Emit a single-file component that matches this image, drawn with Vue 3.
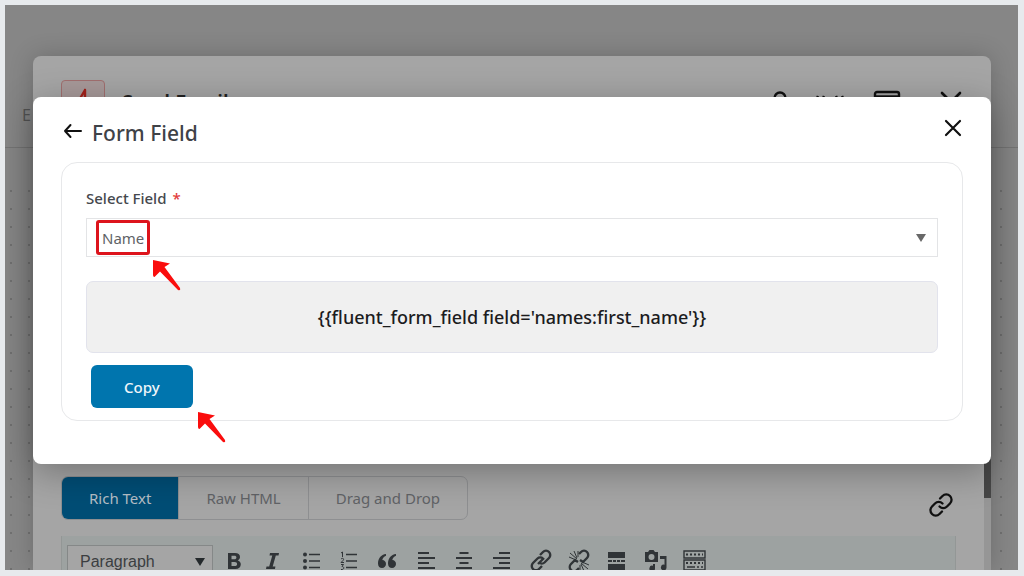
<script setup>
import { ref } from 'vue'

const field = ref('Name')
const format = ref('Paragraph')
const shortcode = "{{fluent_form_field field='names:first_name'}}"
const tabs = ['Rich Text', 'Raw HTML', 'Drag and Drop']
const activeTab = ref('Rich Text')
</script>

<template>
  <div class="page">
    <div class="stage">
      <div class="topbar"><span>E</span></div>
      <div class="dots"></div>

      <section class="panel" aria-label="Send Email">
        <header class="panel-head">
          <span class="badge">
            <svg width="26" height="28" viewBox="0 0 26 28" fill="none" stroke="#a3201a" stroke-width="2.4" stroke-linecap="round" stroke-linejoin="round"><path d="M15 2 8 14h10L10 26M15 2v9" /></svg>
          </span>
          <h1>Send Email</h1>
          <div class="head-tools">
            <button type="button" aria-label="Search"><svg width="14" height="28" viewBox="0 0 14 28" fill="none" stroke="#111" stroke-width="2.4"><circle cx="7" cy="10" r="5.500" /><path d="M7 16v9" /></svg></button>
            <button type="button" aria-label="Shortcodes"><svg width="32" height="28" viewBox="0 0 32 28" fill="none" stroke="#111" stroke-width="2.4"><path d="m4 8-3 6M10 8l-3 6M22 8l3 6M28 8l3 6" /></svg></button>
            <button type="button" aria-label="Layout"><svg width="28" height="28" viewBox="0 0 28 28" fill="none" stroke="#111" stroke-width="2.4"><rect x="2" y="4" width="24" height="20" rx="2" /><path d="M2 8.500h24" /></svg></button>
            <button type="button" class="close-panel" aria-label="Close panel"><svg width="22" height="28" viewBox="0 0 22 28" fill="none" stroke="#111" stroke-width="2.6" stroke-linecap="round"><path d="m2 5 18 18M20 5 2 23" /></svg></button>
          </div>
        </header>

        <div class="panel-body">
          <div class="tab-row">
            <div class="tabs">
              <button v-for="t in tabs" :key="t" type="button" :class="{ active: t === activeTab }" @click="activeTab = t">{{ t }}</button>
            </div>
            <button type="button" class="link-btn" aria-label="Insert link">
              <svg width="26" height="26" viewBox="0 0 26 26" fill="none" stroke="#111" stroke-width="2.3" stroke-linecap="round"><path d="M12 6.500 14.500 4a5.200 5.200 0 0 1 7.500 7.500l-3 3a5.200 5.200 0 0 1-7.500 0" /><path d="M14 19.500 11.500 22A5.200 5.200 0 0 1 4 14.500l3-3a5.200 5.200 0 0 1 7.500 0" /></svg>
            </button>
          </div>

          <div class="editor">
            <div class="format">
              <select v-model="format" aria-label="Text format">
                <option>Paragraph</option>
                <option>Heading 1</option>
              </select>
              <svg width="10" height="8" viewBox="0 0 10 8" fill="#25292c"><path d="M0 0h10L5 8z" /></svg>
            </div>
            <div class="tools">
              <button type="button" aria-label="Bold"><svg viewBox="0 0 24 24"><path fill-rule="evenodd" d="M6 4h7c3.200 0 5 1.500 5 4 0 1.600-.8 2.800-2.300 3.400 2 .5 3.100 1.900 3.100 3.900 0 3-2 4.700-5.500 4.700H6zm3.500 2.800v3.500h2.800c1.400 0 2.100-.6 2.100-1.800s-.7-1.700-2.100-1.700zm0 6.200v4.100h3.200c1.600 0 2.400-.7 2.400-2.100 0-1.300-.8-2-2.400-2z" /></svg></button>
              <button type="button" aria-label="Italic"><svg viewBox="0 0 24 24"><path d="M10 4h9l-.5 2.500h-2.700L12.700 17.500h2.700L15 20H6l.5-2.500h2.700l3.100-11H9.500z" /></svg></button>
              <button type="button" aria-label="Bulleted list"><svg viewBox="0 0 24 24"><circle cx="6" cy="5.500" r="2" /><circle cx="6" cy="12" r="2" /><circle cx="6" cy="18.500" r="2" /><path d="M10 4.700h11v1.600H10zm0 6.500h11v1.600H10zm0 6.500h11v1.600H10z" /></svg></button>
              <button type="button" aria-label="Numbered list"><svg viewBox="0 0 24 24"><path d="M9 4.700h11v1.600H9zm0 6.500h11v1.600H9zm0 6.500h11v1.600H9z" /><path fill="none" stroke="#303437" d="m4 4 1.500-1V8M4 10c2-1.500 3.500 0 2 1.500L4 13.500h3M4 15.500h2.500L5 17.500c2.500 0 2.500 3.500-1 3" /></svg></button>
              <button type="button" aria-label="Quote"><svg viewBox="0 0 24 24"><path d="M11 5C6 5.500 3 9.500 3 14.500 3 17.500 4.800 19 7 19c2.300 0 4-1.700 4-4s-1.600-3.800-3.700-3.900C7.600 9 8.900 7.300 11 6.700zm10 0c-5 .5-8 4.500-8 9.500 0 3 1.800 4.500 4 4.500 2.300 0 4-1.700 4-4s-1.600-3.800-3.700-3.900c.3-2.100 1.600-3.800 3.700-4.400z" /></svg></button>
              <button type="button" aria-label="Align left"><svg viewBox="0 0 24 24"><path d="M4 3h11v2H4zm0 5h17v2H4zm0 5h11v2H4zm0 5h17v2H4z" /></svg></button>
              <button type="button" aria-label="Align center"><svg viewBox="0 0 24 24"><path d="M7.500 3h9v2h-9zM4 8h16v2H4zm3.500 5h9v2h-9zM4 18h16v2H4z" /></svg></button>
              <button type="button" aria-label="Align right"><svg viewBox="0 0 24 24"><path d="M9 3h11v2H9zM3 8h17v2H3zm6 5h11v2H9zm-6 5h17v2H3z" /></svg></button>
              <button type="button" aria-label="Link"><svg viewBox="0 0 24 24" class="line"><path d="m11 6 3-3a4 4 0 0 1 6 6l-4.500 4.500a4 4 0 0 1-5.500 0M13 17l-3 3a4 4 0 0 1-6-6l4.500-4.500a4 4 0 0 1 5.500 0M9 15l6-6" /></svg></button>
              <button type="button" aria-label="Remove link"><svg viewBox="0 0 24 24" class="line"><path d="m12 5 2-2a4 4 0 0 1 6 6l-4 4-3-2M12 19l-2 2a4 4 0 0 1-6-6l4-4 3 2" /><path class="thin" d="M10 10 3 4M10 9 7 2M9 11 2 8M11 8V2M14 14l7 6M14 15l3 7M15 13l7 3M13 16v6" /></svg></button>
              <button type="button" aria-label="Read more"><svg viewBox="0 0 24 24"><path d="M3 3h17v6H3zm0 8h4v2H3zm5 0h3v2H8zm4 0h3v2h-3zm4 0h4v2h-4zM3 15h17v6H3z" /></svg></button>
              <button type="button" aria-label="Media"><svg viewBox="0 0 24 24"><path fill-rule="evenodd" d="M1 3h3l1.500-2h4L11 3h3v10H1zm6.500 2a3 3 0 1 0 0 6 3 3 0 0 0 0-6zM16 7h6.500v11.500a2.800 2.800 0 1 1-2-2.700V10H16zM9 15h2v4.500a2.800 2.800 0 1 1-2-2.700z" /></svg></button>
              <button type="button" aria-label="Keyboard toolbar"><svg viewBox="0 0 24 24" class="keys"><path d="M2 2h21v7H2zM2 11h21v10H2z" /><path class="dash" d="M4 5.500h17M4 14h17" /><path d="M5 18h8m2 0h2m2 0h2" /></svg></button>
            </div>
          </div>
        </div>
        <div class="scrollbar"><div class="thumb"></div></div>
      </section>

      <section class="modal" role="dialog" aria-labelledby="modal-title">
        <header class="modal-head">
          <button type="button" aria-label="Back"><svg width="20" height="20" viewBox="0 0 20 20" fill="none" stroke="#111" stroke-width="2" stroke-linecap="round" stroke-linejoin="round"><path d="M18 8H2M7.500 2 2 8l5.500 6" /></svg></button>
          <h2 id="modal-title">Form Field</h2>
          <button type="button" class="close" aria-label="Close"><svg width="18" height="18" viewBox="0 0 18 18" fill="none" stroke="#111" stroke-width="2.200" stroke-linecap="round"><path d="m2 2 14 14M16 2 2 16" /></svg></button>
        </header>

        <div class="card">
          <label for="field">Select Field <span class="req">*</span></label>
          <div class="select-wrap">
            <select id="field" v-model="field">
              <option>Name</option>
              <option>Email</option>
            </select>
            <svg class="caret" width="10" height="8" viewBox="0 0 10 8" fill="#686868"><path d="M0 0h10L5 8z" /></svg>
            <span class="marker"></span>
            <svg class="pointer at-field" width="30" height="34" viewBox="0 0 30 34" fill="#fa0d0d"><path d="M1 1 18 4.500 12.500 8 28 29q1 3-2 2L8 12.500 2.500 18Q1 18 1 16z" /></svg>
          </div>
          <div class="code">{{ shortcode }}</div>
          <div class="actions">
            <button type="button" class="copy">Copy</button>
            <svg class="pointer at-copy" width="30" height="34" viewBox="0 0 30 34" fill="#fa0d0d"><path d="M1 1 18 4.500 12.500 8 28 29q1 3-2 2L8 12.500 2.500 18Q1 18 1 16z" /></svg>
          </div>
        </div>
      </section>
    </div>
  </div>
</template>

<style>
body {
  background: #e7eaed;
}
</style>

<style scoped>
* {
  box-sizing: border-box;
}
.page {
  height: 100vh;
  padding: 5px 6px 6px 5px;
  background: #e7eaed;
  font-family: "Noto Sans", "Open Sans", sans-serif;
}
.stage {
  position: relative;
  height: 100%;
  overflow: hidden;
  display: flex;
  flex-direction: column;
  background: #868686;
}
button {
  font: inherit;
  border: 0;
  background: none;
  padding: 0;
  display: flex;
  align-items: center;
  justify-content: center;
  cursor: pointer;
}
svg {
  display: block;
}
h1,
h2 {
  margin: 0;
}
.topbar {
  height: 143px;
  padding: 98px 17px 0;
  border-bottom: 1px solid #747474;
  font-size: 16px;
  line-height: 24px;
  color: #555;
}
.dots {
  flex: 1;
  margin-top: 34px;
  background: radial-gradient(circle, #707070 1px, transparent 1px) -3px 0 / 18px 18px;
}

/* drawer behind the dialog */
.panel {
  position: absolute;
  inset: 51px 27px 0 28px;
  display: flex;
  flex-direction: column;
  background: #a5a5a5;
  border-radius: 8px 8px 0 0;
  box-shadow: 0 0 24px rgba(0, 0, 0, 0.2);
}
.panel-head {
  display: flex;
  align-items: center;
  gap: 17px;
  padding: 24px 29px 0 28px;
}
.badge {
  width: 44px;
  height: 44px;
  display: flex;
  align-items: center;
  justify-content: center;
  border: 1px solid #a16f6f;
  border-radius: 4px;
  background: #a79999;
}
h1 {
  font-size: 20px;
  line-height: 28px;
  font-weight: 600;
  color: #222;
}
.head-tools {
  margin-left: auto;
  display: flex;
  gap: 27px;
}
.close-panel {
  margin-left: 12px;
}
.panel-body {
  flex: 1;
  display: flex;
  flex-direction: column;
  justify-content: flex-end;
  gap: 16px;
  padding: 0 35px 0 28px;
}
.tab-row {
  display: flex;
  align-items: flex-end;
  justify-content: space-between;
}
.link-btn {
  padding: 0 2px 2px 0;
}
.tabs {
  display: flex;
  border: 1px solid #8e8f91;
  border-radius: 7px;
  overflow: hidden;
}
.tabs button {
  height: 42px;
  padding: 0 27px;
  font-size: 15px;
  color: #606266;
  border-right: 1px solid #8e8f91;
}
.tabs button:last-child {
  border-right: 0;
}
.tabs .active {
  background: #004d75;
  color: #b5bec5;
}
.editor {
  display: flex;
  gap: 9px;
  height: 34px;
  padding: 9px 5px 0;
  background: #9da2a1;
  border: solid #939796;
  border-width: 0 1px;
  overflow: hidden;
}
.format {
  position: relative;
  flex: none;
}
.format select {
  appearance: none;
  width: 146px;
  height: 32px;
  padding: 0 12px;
  font-family: "Liberation Sans", Arial, sans-serif;
  font-size: 16px;
  color: #3b3e41;
  background: #a5a5a5;
  border: 1px solid #858888;
  border-radius: 0;
}
.format svg {
  position: absolute;
  right: 8px;
  top: 13px;
  pointer-events: none;
}
.tools {
  display: flex;
  justify-content: space-between;
  width: 484px;
}
.tools button {
  width: 24px;
  height: 32px;
}
.tools svg {
  width: 24px;
  height: 24px;
  fill: #303437;
}
.tools .line,
.tools .keys {
  fill: none;
  stroke: #303437;
  stroke-width: 2.4;
}
.tools .thin {
  stroke-width: 1;
}
.tools .keys {
  stroke-width: 1.4;
}
.tools .dash {
  stroke-width: 2;
  stroke-dasharray: 2 2;
}
.scrollbar {
  position: absolute;
  top: 0;
  right: 0;
  bottom: 0;
  width: 7px;
  border-radius: 0 8px 0 0;
  background: linear-gradient(transparent 50%, #969696 50%);
}
.thumb {
  margin-top: 200px;
  height: 242px;
  background: #464646;
}

/* dialog */
.modal {
  position: absolute;
  inset: 92px 27px auto 28px;
  padding: 16px 28px 43px;
  background: #fff;
  border-radius: 8px;
  box-shadow: 0 8px 36px rgba(0, 0, 0, 0.3);
}
.modal-head {
  display: flex;
  align-items: center;
  gap: 9px;
  height: 40px;
  padding-left: 2px;
}
h2 {
  font-size: 21px;
  line-height: 40px;
  font-weight: 500;
  color: #3f4247;
}
.close {
  margin-left: auto;
  padding: 0 1px 10px 0;
}
.card {
  margin-top: 9px;
  padding: 23px 24px 12px;
  border: 1px solid #e7e8ea;
  border-radius: 16px;
}
label {
  display: block;
  font-size: 15px;
  line-height: 24px;
  font-weight: 500;
  color: #45484d;
}
.req {
  margin-left: 2px;
  color: #e23b3b;
}
.select-wrap {
  position: relative;
  margin-top: 8px;
}
.select-wrap select {
  display: block;
  appearance: none;
  width: 100%;
  height: 39px;
  padding: 0 15px;
  font-family: inherit;
  font-size: 15px;
  color: #606266;
  background: #fff;
  border: 1px solid #e3e4e6;
  border-radius: 0;
}
.caret {
  position: absolute;
  right: 12px;
  top: 16px;
  pointer-events: none;
}
.marker {
  position: absolute;
  left: 10px;
  top: 2px;
  width: 54px;
  height: 35px;
  border: 3px solid #dd141c;
  border-radius: 3px;
  pointer-events: none;
}
.pointer {
  position: absolute;
  pointer-events: none;
}
.at-field {
  left: 66px;
  top: 41px;
}
.code {
  margin-top: 24px;
  padding: 21px 16px;
  font-size: 18px;
  line-height: 28px;
  font-weight: 500;
  text-align: center;
  color: #1c1c1e;
  background: #f0f0f0;
  border: 1px solid #e2e3ec;
  border-radius: 7px;
}
.actions {
  position: relative;
  padding: 12px 5px 0;
}
.copy {
  height: 43px;
  padding: 0 33px;
  font-size: 15px;
  font-weight: 500;
  color: #f0f6fa;
  background: #0075ae;
  border-radius: 6px;
}
.at-copy {
  left: 111px;
  top: 58px;
}
</style>
